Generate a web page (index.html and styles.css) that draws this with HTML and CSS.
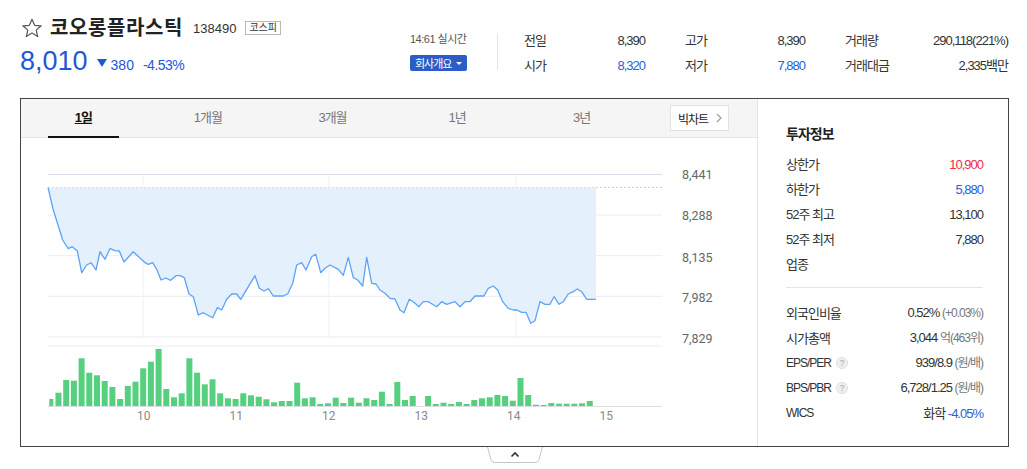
FILE: index.html
```html
<!DOCTYPE html>
<html lang="ko">
<head>
  <meta charset="UTF-8">
  <meta name="viewport" content="width=device-width, initial-scale=1.0">
  <title>코오롱플라스틱</title>
  <link rel="stylesheet" href="styles.css">
</head>
<body>
  <div class="summary">
    <div class="name-block">
      <div class="title-row">
        <svg class="star" viewBox="0 0 20 20"><polygon points="10,1.2 12.6,7.3 19.2,7.8 14.2,12.1 15.7,18.6 10,15.1 4.3,18.6 5.8,12.1 0.8,7.8 7.4,7.3" fill="none" stroke="#555" stroke-width="1.2" stroke-linejoin="round"/></svg>
        <h1 class="title">코오롱플라스틱</h1>
        <span class="code">138490</span>
        <span class="market">코스피</span>
      </div>
      <div class="price-row">
        <span class="price">8,010</span>
        <span class="down-arrow"></span>
        <span class="change">380</span>
        <span class="rate">-4.53%</span>
      </div>
    </div>

    <div class="mid-block">
      <div class="clock">14:61 실시간</div>
      <button class="info-btn">회사개요 <span class="caret"></span></button>
    </div>
    <div class="divider"></div>

    <div class="quote-table">
      <div class="cell"><span>전일</span><span>8,390</span></div>
      <div class="cell"><span>고가</span><span>8,390</span></div>
      <div class="cell"><span>거래량</span><span>290,118(221%)</span></div>
      <div class="cell"><span>시가</span><span class="blue">8,320</span></div>
      <div class="cell"><span>저가</span><span class="blue">7,880</span></div>
      <div class="cell"><span>거래대금</span><span>2,335백만</span></div>
    </div>
  </div>

  <div class="chart-box">
    <div class="chart-panel">
      <div class="tabs">
        <div class="tab active">1일</div>
        <div class="tab">1개월</div>
        <div class="tab">3개월</div>
        <div class="tab">1년</div>
        <div class="tab">3년</div>
        <button class="big-chart">빅차트 <svg width="6" height="10" viewBox="0 0 6 10"><path d="M1 1 L5 5 L1 9" fill="none" stroke="#999" stroke-width="1.1"/></svg></button>
      </div>

      <svg class="chart" viewBox="21 138 736 308" width="736" height="308">
        <g class="grid">
          <line class="grid-top" x1="48" y1="174.5" x2="662" y2="174.5"/>
          <line x1="48" y1="215" x2="662" y2="215"/>
          <line x1="48" y1="255.7" x2="662" y2="255.7"/>
          <line x1="48" y1="296.3" x2="662" y2="296.3"/>
          <line x1="48" y1="337" x2="662" y2="337"/>
          <line x1="48" y1="346" x2="662" y2="346"/>
          <line class="grid-v" x1="143" y1="175" x2="143" y2="337"/>
          <line class="grid-v" x1="329" y1="175" x2="329" y2="337"/>
          <line class="grid-v" x1="516" y1="175" x2="516" y2="337"/>
        </g>
        <line class="prev-close" x1="48" y1="187.5" x2="662" y2="187.5"/>

        <polygon class="area" points="48,187.5 53.3,210 62.7,240 68.3,248.7 72.3,246.7 77.3,251 81.7,272.7 86.7,265 91,262.7 96,270 100,251.7 105,259.3 110,248.7 115,250.7 119.3,251 124,262 133.3,251.7 145,262.7 148.3,264.3 152.7,262.7 156.7,269.3 161,280 165.7,278 170.7,280.3 176,275.7 180,275.7 184.3,277.7 189,294 193.3,296.7 198.3,315 203.3,312.7 212.7,317.7 217.3,307.7 221.7,310 226.7,299.3 231.7,294 236.7,294 240.7,299.3 255,275.7 259.3,288.3 264,291 268.3,288.7 273.3,296 283.3,296 287.7,294 292.7,283.3 296.7,265 301.7,262.7 306,270 311.7,256.7 315.7,254.3 320.7,272.7 325,268.3 330,265 338.3,269.3 343.3,275.3 348.3,257.3 353.3,277.7 357.7,280 362.7,286 366.7,257.3 371.7,283.3 376,284 380,290 385,293.3 390,298.3 395,299 400,310 404,312.7 409.3,299.3 413.3,301.7 419,306.7 423.3,301.7 428.3,301.7 436.7,306.7 441.7,301.7 446.7,304.3 455,301.7 460,306.7 465,301.7 470,301.7 475,296 484,296 488.3,288.3 493.3,286 497.7,290 502.7,301.7 508.3,308.3 513.3,310 516.7,310 521.7,312.3 526,312.3 530.7,323.3 535,320.7 540,301.7 545,304.3 550,304.3 554,296.7 559,304.3 563.3,301.7 568.3,294 573.3,291.7 577.3,289 581.7,291.7 586.7,299.3 596,299.3 596,187.5"/>
        <polyline class="price-line" points="48,187.5 53.3,210 62.7,240 68.3,248.7 72.3,246.7 77.3,251 81.7,272.7 86.7,265 91,262.7 96,270 100,251.7 105,259.3 110,248.7 115,250.7 119.3,251 124,262 133.3,251.7 145,262.7 148.3,264.3 152.7,262.7 156.7,269.3 161,280 165.7,278 170.7,280.3 176,275.7 180,275.7 184.3,277.7 189,294 193.3,296.7 198.3,315 203.3,312.7 212.7,317.7 217.3,307.7 221.7,310 226.7,299.3 231.7,294 236.7,294 240.7,299.3 255,275.7 259.3,288.3 264,291 268.3,288.7 273.3,296 283.3,296 287.7,294 292.7,283.3 296.7,265 301.7,262.7 306,270 311.7,256.7 315.7,254.3 320.7,272.7 325,268.3 330,265 338.3,269.3 343.3,275.3 348.3,257.3 353.3,277.7 357.7,280 362.7,286 366.7,257.3 371.7,283.3 376,284 380,290 385,293.3 390,298.3 395,299 400,310 404,312.7 409.3,299.3 413.3,301.7 419,306.7 423.3,301.7 428.3,301.7 436.7,306.7 441.7,301.7 446.7,304.3 455,301.7 460,306.7 465,301.7 470,301.7 475,296 484,296 488.3,288.3 493.3,286 497.7,290 502.7,301.7 508.3,308.3 513.3,310 516.7,310 521.7,312.3 526,312.3 530.7,323.3 535,320.7 540,301.7 545,304.3 550,304.3 554,296.7 559,304.3 563.3,301.7 568.3,294 573.3,291.7 577.3,289 581.7,291.7 586.7,299.3 596,299.3"/>

        <!-- volume, 5 minute bars -->
        <g class="volume">
          <rect x="49.3" y="399" width="4" height="7"/>
          <rect x="55.5" y="392.7" width="6" height="13.3"/>
          <rect x="63.2" y="380" width="6" height="26"/>
          <rect x="70.9" y="380.7" width="6" height="25.3"/>
          <rect x="78.6" y="358.3" width="6" height="47.7"/>
          <rect x="86.3" y="372.7" width="6" height="33.3"/>
          <rect x="94" y="375.3" width="6" height="30.7"/>
          <rect x="101.7" y="381" width="6" height="25"/>
          <rect x="109.4" y="387" width="6" height="19"/>
          <rect x="117.1" y="399" width="6" height="7"/>
          <rect x="124.8" y="386" width="6" height="20"/>
          <rect x="132.5" y="381.7" width="6" height="24.3"/>
          <rect x="140.2" y="368.3" width="6" height="37.7"/>
          <rect x="147.9" y="361.7" width="6" height="44.3"/>
          <rect x="155.6" y="349" width="6" height="57"/>
          <rect x="163.3" y="389" width="6" height="17"/>
          <rect x="171" y="397.3" width="6" height="8.7"/>
          <rect x="178.7" y="393.3" width="6" height="12.7"/>
          <rect x="186.4" y="358.3" width="6" height="47.7"/>
          <rect x="194.1" y="372.7" width="6" height="33.3"/>
          <rect x="201.8" y="384.3" width="6" height="21.7"/>
          <rect x="209.5" y="379.3" width="6" height="26.7"/>
          <rect x="217.2" y="393.3" width="6" height="12.7"/>
          <rect x="224.9" y="398.3" width="6" height="7.7"/>
          <rect x="232.6" y="399" width="6" height="7"/>
          <rect x="240.3" y="393.3" width="6" height="12.7"/>
          <rect x="248" y="395.3" width="6" height="10.7"/>
          <rect x="255.7" y="396.7" width="6" height="9.3"/>
          <rect x="263.4" y="399.3" width="6" height="6.7"/>
          <rect x="271.1" y="402.3" width="6" height="3.7"/>
          <rect x="278.8" y="401" width="6" height="5"/>
          <rect x="286.5" y="401" width="6" height="5"/>
          <rect x="294.2" y="382.7" width="6" height="23.3"/>
          <rect x="301.9" y="398.3" width="6" height="7.7"/>
          <rect x="309.6" y="397.3" width="6" height="8.7"/>
          <rect x="317.3" y="404" width="6" height="2"/>
          <rect x="325" y="403.3" width="6" height="2.7"/>
          <rect x="332.7" y="397.7" width="6" height="8.3"/>
          <rect x="340.4" y="403" width="6" height="3"/>
          <rect x="348.1" y="397.7" width="6" height="8.3"/>
          <rect x="355.8" y="402.7" width="6" height="3.3"/>
          <rect x="363.5" y="398.3" width="6" height="7.7"/>
          <rect x="371.2" y="400" width="6" height="6"/>
          <rect x="378.9" y="391.7" width="6" height="14.3"/>
          <rect x="386.6" y="404" width="6" height="2"/>
          <rect x="394.3" y="382" width="6" height="24"/>
          <rect x="402" y="400" width="6" height="6"/>
          <rect x="409.7" y="396" width="6" height="10"/>
          <rect x="425.1" y="396" width="6" height="10"/>
          <rect x="432.8" y="404" width="6" height="2"/>
          <rect x="440.5" y="402.7" width="6" height="3.3"/>
          <rect x="448.2" y="404" width="6" height="2"/>
          <rect x="455.9" y="402" width="6" height="4"/>
          <rect x="463.6" y="404" width="6" height="2"/>
          <rect x="471.3" y="400" width="6" height="6"/>
          <rect x="479" y="398.3" width="6" height="7.7"/>
          <rect x="486.7" y="397.3" width="6" height="8.7"/>
          <rect x="494.4" y="395" width="6" height="11"/>
          <rect x="502.1" y="396" width="6" height="10"/>
          <rect x="509.8" y="400.7" width="6" height="5.3"/>
          <rect x="517.5" y="378" width="6" height="28"/>
          <rect x="525.2" y="395" width="6" height="11"/>
          <rect x="532.9" y="404.7" width="6" height="1.3"/>
          <rect x="540.6" y="405" width="6" height="1"/>
          <rect x="548.3" y="403" width="6" height="3"/>
          <rect x="556" y="403.7" width="6" height="2.3"/>
          <rect x="563.7" y="403.7" width="6" height="2.3"/>
          <rect x="571.4" y="403.7" width="6" height="2.3"/>
          <rect x="579.1" y="403.3" width="6" height="2.7"/>
          <rect x="586.8" y="401" width="6" height="5"/>
        </g>
        <line class="baseline" x1="48" y1="406.5" x2="662" y2="406.5"/>

        <g class="y-labels">
          <text x="682" y="179.3">8,441</text>
          <text x="682" y="220">8,288</text>
          <text x="682" y="261.5">8,135</text>
          <text x="682" y="302">7,982</text>
          <text x="682" y="342.5">7,829</text>
        </g>
        <g class="x-labels">
          <text x="143.7" y="420">10</text>
          <text x="236.2" y="420">11</text>
          <text x="328.7" y="420">12</text>
          <text x="421.2" y="420">13</text>
          <text x="513.7" y="420">14</text>
          <text x="606.2" y="420">15</text>
        </g>
      </svg>
    </div>

    <div class="info-panel">
      <h2 class="info-title">투자정보</h2>
      <ul class="info-list">
        <li><span>상한가</span><span class="red">10,900</span></li>
        <li><span>하한가</span><span class="blue">5,880</span></li>
        <li><span>52주 최고</span><span>13,100</span></li>
        <li><span>52주 최저</span><span>7,880</span></li>
        <li><span>업종</span><span></span></li>
      </ul>
      <hr class="info-line">
      <ul class="info-list">
        <li><span>외국인비율</span><span>0.52% <em class="sub">(+0.03%)</em></span></li>
        <li><span>시가총액</span><span>3,044 <em class="sub">억(463위)</em></span></li>
        <li><span class="latin">EPS/PER <i class="help">?</i></span><span>939/8.9 <em class="sub">(원/배)</em></span></li>
        <li><span class="latin">BPS/PBR <i class="help">?</i></span><span>6,728/1.25 <em class="sub">(원/배)</em></span></li>
        <li><span class="latin">WICS</span><span>화학 <em class="blue">-4.05%</em></span></li>
      </ul>
    </div>
  </div>

  <div class="expand">
    <svg width="56" height="16" viewBox="0 0 56 16">
      <path d="M0.5 0 L4 12.5 Q4.8 15.5 7.5 15.5 H48.5 Q51.2 15.5 52 12.5 L55.5 0" fill="#fff" stroke="#c6c6c6"/>
      <path d="M24.5 9.5 L28 6 L31.5 9.5" fill="none" stroke="#333" stroke-width="1.7"/>
    </svg>
  </div>
</body>
</html>
```

FILE: styles.css
```css
* { box-sizing: border-box; }
body {
  margin: 0;
  font-family: "Liberation Sans", "Noto Sans CJK KR", sans-serif;
  font-size: 13px;
  color: #333;
  letter-spacing: -1px;
  background: #fff;
}
button { font-family: inherit; letter-spacing: inherit; cursor: pointer; }
.blue { color: #2b5ed8; }
.red { color: #f02c44; }

/* top summary */
.summary {
  display: flex;
  height: 98px;
  padding: 14px 0 0 20px;
}
.name-block { width: 390px; }
.title-row {
  display: flex;
  align-items: center;
  height: 24px;
  margin-top: 2px;
}
.star { width: 20px; height: 20px; margin: -1px 8px 0 2px; }
.title {
  margin: 0;
  font-size: 20px;
  font-weight: bold;
  color: #222;
  letter-spacing: 0.6px;
  line-height: 24px;
}
.code { margin-left: 10px; font-size: 13px; letter-spacing: 0; color: #333; }
.market {
  margin-left: 9px;
  padding: 0 3px;
  height: 14px;
  line-height: 12px;
  font-size: 10px;
  letter-spacing: 0;
  border: 1px solid #bbb;
  color: #333;
}
.price-row {
  display: flex;
  align-items: baseline;
  margin-top: 6px;
  color: #1f58d6;
}
.price { font-size: 27px; line-height: 30px; letter-spacing: 0; }
.down-arrow {
  align-self: center;
  margin: 4px 4px 0 9px;
  border-left: 5px solid transparent;
  border-right: 5px solid transparent;
  border-top: 8px solid #1f58d6;
}
.change { font-size: 14px; letter-spacing: 0; }
.rate { margin-left: 9px; font-size: 14px; letter-spacing: -0.5px; }

.mid-block { width: 87px; padding-top: 17px; }
.clock { font-size: 11px; line-height: 16px; color: #555; letter-spacing: -0.5px; }
.info-btn {
  display: flex;
  align-items: center;
  margin-top: 8px;
  height: 16px;
  padding: 0 5px 0 5px;
  border: none;
  border-radius: 2px;
  background: #2c5dc6;
  color: #fff;
  font-size: 11px;
}
.caret {
  margin-left: 5px;
  border-left: 3px solid transparent;
  border-right: 3px solid transparent;
  border-top: 3px solid #fff;
}
.divider { width: 1px; height: 37px; margin-top: 19px; background: #e4e4e4; }

.quote-table {
  display: grid;
  grid-template-columns: 121px 120px 163px;
  column-gap: 40px;
  margin: 14px 0 0 26px;
  line-height: 25px;
  align-self: flex-start;
}
.cell { display: flex; justify-content: space-between; }

/* chart box */
.chart-box {
  display: flex;
  width: 989px;
  height: 349px;
  margin-left: 20px;
  border: 1px solid #444;
}
.chart-panel { width: 736px; }
.tabs {
  display: flex;
  align-items: center;
  height: 39px;
  background: #f5f5f5;
  border-bottom: 1px solid #e5e5e5;
}
.tab {
  position: relative;
  width: 124.6px;
  line-height: 38px;
  text-align: center;
  color: #777;
}
.tab.active { color: #111; font-weight: bold; text-decoration: underline; }
.tab.active::after {
  content: "";
  position: absolute;
  left: 27px;
  right: 27px;
  bottom: -1px;
  height: 2px;
  background: #111;
}
.big-chart {
  display: flex;
  align-items: center;
  gap: 8px;
  margin-left: 26px;
  height: 26px;
  padding: 0 6px 0 7px;
  background: #fff;
  border: 1px solid #e2e2e2;
  color: #222;
  font-size: 12px;
}

.chart { display: block; }
.chart text { font-family: Roboto, "Liberation Sans", sans-serif; letter-spacing: 0; }
.grid line { stroke: #ececf1; stroke-width: 1; }
.grid .grid-top { stroke: #dcdce6; }
.grid .grid-v { stroke: #eef1f6; }
.prev-close { stroke: #cfcfd6; stroke-dasharray: 2 2; }
.area { fill: #e5f0fd; }
.price-line { fill: none; stroke: #5ca3f8; stroke-width: 1.3; stroke-linejoin: round; }
.volume rect { fill: #55d07f; }
.baseline { stroke: #dedee4; }
.y-labels text { font-size: 12.5px; fill: #666; }
.x-labels text { font-size: 12px; fill: #8a8a8a; text-anchor: middle; }

/* right info panel */
.info-panel {
  width: 251px;
  padding: 25px 25px 0 28px;
  border-left: 1px solid #e5e5e5;
}
.info-title {
  margin: 0 0 7.5px;
  font-size: 14px;
  line-height: 20px;
  color: #222;
}
.info-list { list-style: none; margin: 0; padding: 0; }
.info-list li {
  display: flex;
  justify-content: space-between;
  align-items: center;
  line-height: 25px;
  height: 25px;
}
.info-line { margin: 10.5px 0 12.5px; border: none; border-top: 1px solid #e5e5e5; }
.sub { font-style: normal; font-size: 12px; color: #777; }
.info-list em.blue { font-style: normal; }
.latin { font-size: 12px; display: flex; align-items: center; }
.help {
  display: inline-block;
  width: 12px;
  height: 12px;
  margin-left: 5px;
  border-radius: 50%;
  background: #efefef;
  border: 1px solid #e0e0e0;
  color: #aaa;
  font-style: normal;
  font-size: 9px;
  line-height: 10px;
  text-align: center;
  letter-spacing: 0;
}

.expand {
  display: flex;
  justify-content: center;
  width: 989px;
  margin-left: 20px;
}
.expand svg { display: block; }
```
